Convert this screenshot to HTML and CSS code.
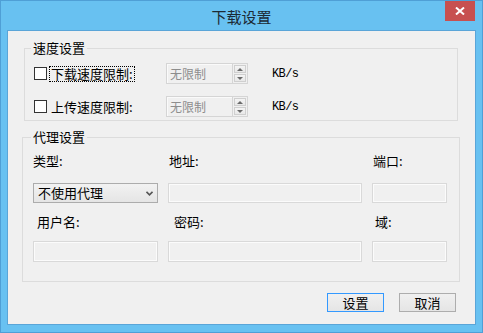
FILE: index.html
```html
<!DOCTYPE html>
<html lang="zh-CN">
<head>
    <meta charset="UTF-8">
    <title>下载设置</title>
    <link rel="stylesheet" href="styles.css">
</head>
<body>
<div class="window">
    <!-- Thanh tiêu đề -->
    <div class="titlebar">
        <span class="title">下载设置</span>
        <button class="close" aria-label="关闭">
            <svg width="10" height="8" viewBox="0 0 10 8"><path d="M1 0.5 L9 7.5 M9 0.5 L1 7.5" stroke="#fff" stroke-width="2"/></svg>
        </button>
    </div>

    <div class="client">
        <!-- 速度设置 -->
        <fieldset class="group speed">
            <legend>速度设置</legend>
            <div class="speed-row">
                <label class="check"><span class="box"></span><span class="check-text focus">下载速度限制:</span></label>
                <div class="spin">
                    <div class="spin-text">无限制</div>
                    <div class="spin-btns">
                        <span class="spin-btn"><i class="arrow up"></i></span>
                        <span class="spin-btn"><i class="arrow down"></i></span>
                    </div>
                </div>
                <span class="unit">KB/s</span>
            </div>
            <div class="speed-row">
                <label class="check"><span class="box"></span><span class="check-text">上传速度限制:</span></label>
                <div class="spin">
                    <div class="spin-text">无限制</div>
                    <div class="spin-btns">
                        <span class="spin-btn"><i class="arrow up"></i></span>
                        <span class="spin-btn"><i class="arrow down"></i></span>
                    </div>
                </div>
                <span class="unit">KB/s</span>
            </div>
        </fieldset>

        <!-- 代理设置 -->
        <fieldset class="group proxy">
            <legend>代理设置</legend>
            <div class="proxy-grid">
                <span class="field-label">类型:</span>
                <span class="field-label shift">地址:</span>
                <span class="field-label shift">端口:</span>

                <div class="select">
                    <span>不使用代理</span>
                    <svg width="7" height="5" viewBox="0 0 7 5"><path d="M0.5 0.8 L3.5 3.8 L6.5 0.8" fill="none" stroke="#555" stroke-width="1.6"/></svg>
                </div>
                <div class="field"></div>
                <div class="field"></div>

                <span class="field-label indent">用户名:</span>
                <span class="field-label indent2">密码:</span>
                <span class="field-label indent3">域:</span>

                <div class="field"></div>
                <div class="field"></div>
                <div class="field"></div>
            </div>
        </fieldset>

        <div class="actions">
            <button class="btn default">设置</button>
            <button class="btn">取消</button>
        </div>
    </div>
</div>
</body>
</html>
```

FILE: styles.css
```css
* {
    box-sizing: border-box;
}

body {
    margin: 0;
    font-family: "Noto Sans CJK SC", "Noto Sans", sans-serif;
    font-size: 13px;
    color: #000;
    background: #fff;
}

.window {
    width: 483px;
    height: 333px;
    background-color: #68c1f1;
    border: 1px solid #4f9fd6;
    padding: 0 6px 7px;
    display: flex;
    flex-direction: column;
}

.titlebar {
    height: 29px;
    display: grid;
    grid-template-columns: 1fr auto 1fr;
}

.title {
    grid-column: 2;
    font-size: 15px;
    line-height: 29px;
    padding-top: 1px;
    color: #1c2a35;
}

.close {
    grid-column: 3;
    justify-self: end;
    align-self: start;
    width: 30px;
    height: 20px;
    margin-right: 1px;
    padding: 0;
    border: none;
    background-color: #c75050;
    display: flex;
    align-items: center;
    justify-content: center;
}

.client {
    flex: 1;
    background-color: #f0f0f0;
    border: 1px solid #5aa5d8;
    display: flex;
    flex-direction: column;
}

.group {
    border: 1px solid #dcdcdc;
    min-inline-size: 0;
}

.group legend {
    padding: 0 2px;
    font-size: 13px;
    line-height: 14px;
}

.speed {
    margin: 10px 17px 0 16px;
    padding: 8px 0 3px 9px;
}

.speed legend {
    margin-left: -3px;
}

.speed-row {
    display: flex;
    align-items: center;
    height: 21px;
}

.speed-row + .speed-row {
    margin-top: 12px;
}

.check {
    width: 132px;
    display: flex;
    align-items: center;
}

.box {
    width: 13px;
    height: 13px;
    border: 1px solid #333;
    background-color: #fff;
}

.check-text {
    margin-left: 2px;
    padding: 0 1px;
    line-height: 14px;
    border: 1px solid transparent;
}

.focus {
    border: 1px dotted #000;
}

.spin {
    display: flex;
    width: 82px;
    height: 21px;
}

.spin-text {
    flex: 1;
    border: 1px solid #d5d5d5;
    border-right: none;
    background-color: #f0f0f0;
    box-shadow: inset 1px 1px 0 #fafafa;
    padding-left: 3px;
    font-size: 12px;
    line-height: 19px;
    color: #8d8d8d;
}

.spin-btns {
    width: 16px;
    border: 1px solid #d5d5d5;
    display: flex;
    flex-direction: column;
    gap: 1px;
    padding: 1px;
}

.spin-btn {
    flex: 1;
    border: 1px solid #cfcfcf;
    background: linear-gradient(#f4f4f4, #e8e8e8);
    display: flex;
    align-items: center;
    justify-content: center;
}

.arrow {
    width: 0;
    height: 0;
    border-left: 3px solid transparent;
    border-right: 3px solid transparent;
}

.arrow.up {
    border-bottom: 3px solid #6a6a6a;
}

.arrow.down {
    border-top: 3px solid #6a6a6a;
}

.unit {
    margin-left: 24px;
    font-family: "Liberation Mono", monospace;
    font-size: 12px;
    letter-spacing: -0.6px;
}

.proxy {
    margin: 9px 15px 0 14px;
    padding: 9px 0 19px 10px;
}

.proxy legend {
    margin-left: -2px;
}

.proxy-grid {
    display: grid;
    grid-template-columns: 125px 194px 75px;
    grid-template-rows: 19px 20px 16px 21px;
    column-gap: 10px;
    row-gap: 11px;
}

.field-label {
    line-height: 16px;
}

.shift {
    padding-left: 1px;
}

.indent {
    padding-left: 4px;
}

.indent2 {
    padding-left: 6px;
}

.indent3 {
    padding-left: 3px;
}

.select {
    display: flex;
    align-items: center;
    justify-content: space-between;
    border: 1px solid #acacac;
    background: linear-gradient(#f2f2f2, #e5e5e5);
    padding: 0 4px 0 4px;
    line-height: 18px;
}

.field {
    border: 1px solid #d9d9d9;
    background-color: #f0f0f0;
    box-shadow: inset 0 0 0 1px #fbfbfb;
}

.actions {
    display: flex;
    justify-content: flex-end;
    gap: 15px;
    margin-top: 11px;
    padding-right: 19px;
}

.btn {
    width: 57px;
    height: 19px;
    padding: 0;
    border: 1px solid #adadad;
    background: linear-gradient(#f0f0f0, #e5e5e5);
    font-family: inherit;
    font-size: 13px;
    line-height: 17px;
    color: #000;
}

.btn.default {
    border-color: #3399ff;
}
```
